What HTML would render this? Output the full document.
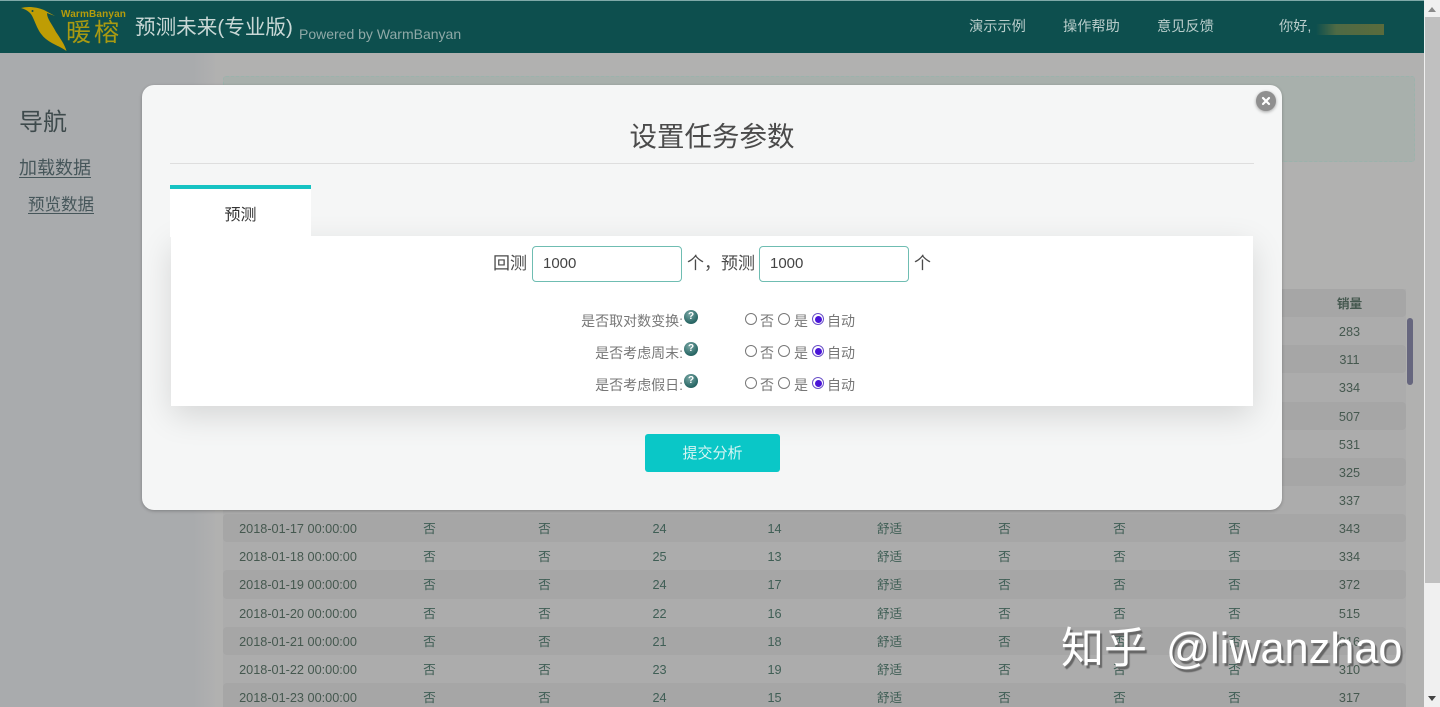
<!DOCTYPE html>
<html lang="zh-CN">
<head>
<meta charset="utf-8">
<title>预测未来(专业版)</title>
<style>
*{box-sizing:border-box;margin:0;padding:0}
html,body{width:1440px;height:707px;overflow:hidden}
body{position:relative;background:#b1b1b0;font-family:"Liberation Sans","Noto Sans CJK SC",sans-serif;color:#555}
.a{position:absolute;white-space:nowrap}
#side{left:0;top:53px;width:215px;height:654px;background:linear-gradient(90deg,#a9abad 0,#a9abad 90%,#b0b0b0 100%)}
#head{left:0;top:0;width:1424px;height:53px;background:#0d4f4e;border-top:1px solid #7fa9a8}
#sb{left:1424px;top:0;width:16px;height:707px;background:#f0f0f0}
#thumb{left:1425px;top:17px;width:15px;height:566px;background:#c0c0c0}
.menu{top:17px;font-size:14.200px;line-height:20px;color:#b9cdcb}
#alert{left:223px;top:76px;width:1192px;height:86px;background:#a8b0ac;border:1px dashed #9bb3ac;border-radius:3px}
#tbl{left:223px;top:289px;width:1183px;font-size:12.700px;color:#3f5e55;background:#acacac}
.r{display:flex;height:28.15px;line-height:30px;text-align:center;background:#acacac}
.r:nth-child(odd){background:#a6a6a6;border-radius:4px}
.r span{width:115px;flex:none}
.r span:first-child{width:149px;color:#45584f;padding-left:1px}
.r span:last-child{color:#45584f}
.r.h{font-weight:bold;color:#1f5b50}
#bar{left:1407px;top:318px;width:6px;height:67px;background:#66667e;border-radius:3px}
#modal{left:142px;top:85px;width:1140px;height:425px;background:#f5f6f6;border-radius:12px;box-shadow:0 1px 3px rgba(0,0,0,.25)}
#title{left:142px;top:116px;width:1140px;text-align:center;font-size:27.500px;line-height:42px;color:#4b4b4b}
#hr{left:170px;top:163px;width:1084px;height:1px;background:#dedede}
#panel{left:171px;top:236px;width:1082px;height:170px;background:#fff;box-shadow:0 10px 30px rgba(0,0,0,.13)}
#tab{left:170px;top:185px;width:141px;height:52px;background:#fff;border-top:4px solid #17c3c3;text-align:center;font-size:16px;line-height:54px;color:#333}
.inp{top:246px;width:150px;height:36px;background:#fff;border:1px solid #6fbdb2;border-radius:4px;padding-left:10px;font-size:15px;line-height:34px;color:#444}
.big{top:252px;font-size:17px;line-height:24px;color:#4a4a4a}
.lab{left:483px;width:200px;text-align:right;font-size:14px;line-height:20px;color:#777}
.q{left:684px;width:14px;height:14px;border-radius:50%;background:radial-gradient(circle at 40% 30%,#7aa7a5,#2c6a68 65%,#1f5251);color:#fff;font:bold 10px/14px "Liberation Sans",sans-serif;text-align:center}
.rd{width:12px;height:12px;border:1px solid #777;border-radius:50%;background:#fff}
.rd.on{border-color:#6a50c8}
.rd.on:after{content:"";position:absolute;left:1.5px;top:1.5px;width:7px;height:7px;border-radius:50%;background:#4a14d8}
.t{font-size:14px;line-height:20px;color:#777}
#btn{left:645px;top:434px;width:135px;height:38px;background:#0ac7c7;border-radius:3px;color:#d5f5f3;text-align:center;font-size:15px;line-height:39px}
#x{left:1256px;top:91px;width:20px;height:20px;border-radius:50%;background:#8f8f8f;box-shadow:0 1px 3px rgba(0,0,0,.35)}
.wm{top:620px;line-height:56px;color:#fff;text-shadow:2px 3px 1px #666}
</style>
</head>
<body>
<div class="a" id="side"></div>
<div class="a" id="alert"></div>

<div class="a" id="tbl">
<div class="r h"><span>日期</span><span>是否</span><span>是否</span><span>高温</span><span>低温</span><span>天气</span><span>是否</span><span>是否</span><span>是否</span><span>销量</span></div>
<div class="r"><span>2018-01-10 00:00:00</span><span>否</span><span>否</span><span>24</span><span>14</span><span>舒适</span><span>否</span><span>否</span><span>否</span><span>283</span></div>
<div class="r"><span>2018-01-11 00:00:00</span><span>否</span><span>否</span><span>24</span><span>14</span><span>舒适</span><span>否</span><span>否</span><span>否</span><span>311</span></div>
<div class="r"><span>2018-01-12 00:00:00</span><span>否</span><span>否</span><span>24</span><span>14</span><span>舒适</span><span>否</span><span>否</span><span>否</span><span>334</span></div>
<div class="r"><span>2018-01-13 00:00:00</span><span>否</span><span>否</span><span>24</span><span>14</span><span>舒适</span><span>否</span><span>否</span><span>否</span><span>507</span></div>
<div class="r"><span>2018-01-14 00:00:00</span><span>否</span><span>否</span><span>24</span><span>14</span><span>舒适</span><span>否</span><span>否</span><span>否</span><span>531</span></div>
<div class="r"><span>2018-01-15 00:00:00</span><span>否</span><span>否</span><span>24</span><span>14</span><span>舒适</span><span>否</span><span>否</span><span>否</span><span>325</span></div>
<div class="r"><span>2018-01-16 00:00:00</span><span>否</span><span>否</span><span>24</span><span>14</span><span>舒适</span><span>否</span><span>否</span><span>否</span><span>337</span></div>
<div class="r"><span>2018-01-17 00:00:00</span><span>否</span><span>否</span><span>24</span><span>14</span><span>舒适</span><span>否</span><span>否</span><span>否</span><span>343</span></div>
<div class="r"><span>2018-01-18 00:00:00</span><span>否</span><span>否</span><span>25</span><span>13</span><span>舒适</span><span>否</span><span>否</span><span>否</span><span>334</span></div>
<div class="r"><span>2018-01-19 00:00:00</span><span>否</span><span>否</span><span>24</span><span>17</span><span>舒适</span><span>否</span><span>否</span><span>否</span><span>372</span></div>
<div class="r"><span>2018-01-20 00:00:00</span><span>否</span><span>否</span><span>22</span><span>16</span><span>舒适</span><span>否</span><span>否</span><span>否</span><span>515</span></div>
<div class="r"><span>2018-01-21 00:00:00</span><span>否</span><span>否</span><span>21</span><span>18</span><span>舒适</span><span>否</span><span>否</span><span>否</span><span>316</span></div>
<div class="r"><span>2018-01-22 00:00:00</span><span>否</span><span>否</span><span>23</span><span>19</span><span>舒适</span><span>否</span><span>否</span><span>否</span><span>310</span></div>
<div class="r"><span>2018-01-23 00:00:00</span><span>否</span><span>否</span><span>24</span><span>15</span><span>舒适</span><span>否</span><span>否</span><span>否</span><span>317</span></div>
</div>
<div class="a" id="bar"></div>

<div class="a" style="left:19px;top:105px;font-size:24px;line-height:36px;color:#3e4a4c">导航</div>
<div class="a" style="left:19px;top:156px;font-size:18px;line-height:24px;color:#46565a;text-decoration:underline;text-underline-offset:3px;text-decoration-thickness:1px">加载数据</div>
<div class="a" style="left:28px;top:193px;font-size:16.5px;line-height:24px;color:#46565a;text-decoration:underline;text-underline-offset:3px;text-decoration-thickness:1px">预览数据</div>

<div class="a" id="head"></div>
<svg class="a" style="left:18px;top:4px" width="52" height="48" viewBox="0 0 52 48">
<path d="M3 4 C10 2 19 3 26 6 L37 12 L29 9 C29 15 34 20 38 28 C42 34 47 41 48.500 47 C42 42 30 39 24 31 C18 24 16 13 12 9 C9 6 6 5 3 4 Z" fill="#bf9d04"/>
<circle cx="14.500" cy="7" r="1" fill="#0d4f4e"/>
</svg>
<div class="a" style="left:61px;top:9px;font-size:10px;line-height:12px;font-weight:bold;color:#b59c0c;letter-spacing:.15px">WarmBanyan</div>
<div class="a" style="left:66px;top:18px;font-size:25px;line-height:30px;color:#a89a12;letter-spacing:3px">暖榕</div>
<div class="a" style="left:135px;top:12px;font-size:20.600px;line-height:32px;color:#c9d8d6">预测未来(专业版)</div>
<div class="a" style="left:299px;top:24px;font-size:14px;line-height:20px;color:#8fa9a7">Powered by WarmBanyan</div>
<div class="a menu" style="left:969px">演示示例</div>
<div class="a menu" style="left:1063px">操作帮助</div>
<div class="a menu" style="left:1157px">意见反馈</div>
<div class="a menu" style="left:1279px">你好,</div>
<div class="a" style="left:1316px;top:24px;width:68px;height:11px;background:linear-gradient(90deg,#0d4f4e 0,#4f6a44 30%,#5a6b3c 100%)"></div>

<div class="a" id="sb"></div>
<div class="a" id="thumb"></div>
<div class="a" style="left:1428px;top:7px;width:0;height:0;border:4px solid transparent;border-top:0;border-bottom:5px solid #8a8a8a"></div>
<div class="a" style="left:1428px;top:696px;width:0;height:0;border:4px solid transparent;border-bottom:0;border-top:5px solid #444"></div>

<div class="a" id="modal"></div>
<div class="a" id="title">设置任务参数</div>
<div class="a" id="hr"></div>
<div class="a" id="panel"></div>
<div class="a" id="tab">预测</div>

<div class="a big" style="left:493px">回测</div>
<div class="a inp" style="left:532px">1000</div>
<div class="a big" style="left:687px">个，预测</div>
<div class="a inp" style="left:759px">1000</div>
<div class="a big" style="left:914px">个</div>

<div class="a lab" style="top:311px">是否取对数变换:</div>
<div class="a q" style="top:310px">?</div>
<div class="a rd" style="left:745px;top:313px"></div><div class="a t" style="left:760px;top:311px">否</div>
<div class="a rd" style="left:778px;top:313px"></div><div class="a t" style="left:794px;top:311px">是</div>
<div class="a rd on" style="left:812px;top:313px"></div><div class="a t" style="left:827px;top:311px">自动</div>

<div class="a lab" style="top:343px">是否考虑周末:</div>
<div class="a q" style="top:342px">?</div>
<div class="a rd" style="left:745px;top:345px"></div><div class="a t" style="left:760px;top:343px">否</div>
<div class="a rd" style="left:778px;top:345px"></div><div class="a t" style="left:794px;top:343px">是</div>
<div class="a rd on" style="left:812px;top:345px"></div><div class="a t" style="left:827px;top:343px">自动</div>

<div class="a lab" style="top:375px">是否考虑假日:</div>
<div class="a q" style="top:374px">?</div>
<div class="a rd" style="left:745px;top:377px"></div><div class="a t" style="left:760px;top:375px">否</div>
<div class="a rd" style="left:778px;top:377px"></div><div class="a t" style="left:794px;top:375px">是</div>
<div class="a rd on" style="left:812px;top:377px"></div><div class="a t" style="left:827px;top:375px">自动</div>

<div class="a" id="btn">提交分析</div>

<div class="a" id="x"><svg width="20" height="20" viewBox="0 0 20 20" style="position:absolute;left:0;top:0"><path d="M7 7 L13 13 M13 7 L7 13" stroke="#fff" stroke-width="2.200" stroke-linecap="round"/></svg></div>

<div class="a wm" style="left:1061px;font-size:43px;top:621px">知乎</div>
<div class="a wm" style="left:1166px;font-size:43.300px;top:621px">@liwanzhao</div>
</body>
</html>
